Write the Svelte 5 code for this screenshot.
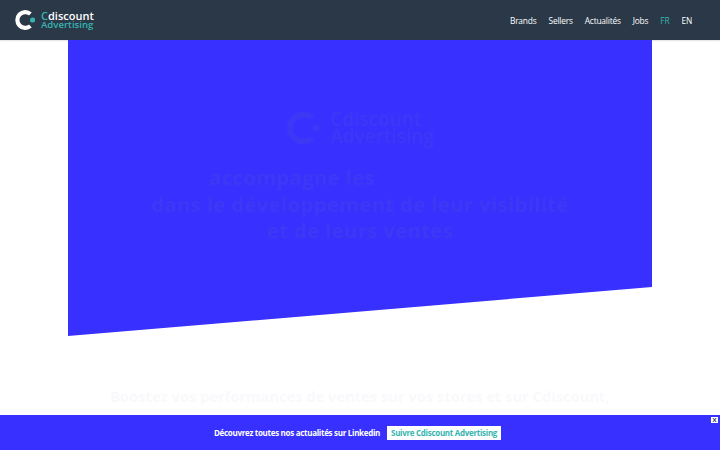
<script>
  const links = ['Brands', 'Sellers', 'Actualités', 'Jobs'];
</script>

<header class="nav">
  <a class="logo" href="#top">
    <svg width="20" height="20" viewBox="0 0 20 20" aria-hidden="true">
      <path d="M15.4 4 A7.9 7.9 0 1 0 15.4 16" fill="none" stroke="#fff" stroke-width="4.2"/>
      <circle cx="17.6" cy="10" r="2.6" fill="#36b5b0"/>
    </svg>
    <span class="wordmark"><span class="w1"><b>C</b>discount</span><span class="w2">Advertising</span></span>
  </a>
  <nav class="links">
    {#each links as l}<a href="#top">{l}</a>{/each}
    <a href="#top" class="active">FR</a>
    <a href="#top">EN</a>
  </nav>
</header>

<main>
  <section class="hero">
    <div class="hero-logo">
      <svg width="34" height="36" viewBox="0 0 20 20" aria-hidden="true">
        <path d="M15.4 4 A7.9 7.9 0 1 0 15.4 16" fill="none" stroke="currentColor" stroke-width="3.6"/>
        <circle cx="17.6" cy="10" r="2.2" fill="currentColor"/>
      </svg>
      <span class="hero-word"><span>Cdiscount</span><span>Advertising</span></span>
    </div>
    <h1>
      <span class="first">accompagne les</span>
      <span>dans le développement de leur visibilité</span>
      <span>et de leurs ventes</span>
    </h1>
  </section>
  <h2>Boostez vos performances de ventes sur vos stores et sur Cdiscount,</h2>
</main>

<aside class="banner">
  <span>Découvrez toutes nos actualités sur Linkedin</span>
  <a class="cta" href="#top">Suivre Cdiscount Advertising</a>
  <button class="close">X</button>
</aside>

<style>
  :global(body) {
    margin: 0;
    background: #fff;
    overflow: hidden;
    font-family: "Open Sans", "Inter", sans-serif;
  }
  .nav {
    height: 40px;
    background: #2a3847;
    display: flex;
    align-items: center;
    justify-content: space-between;
    padding: 0 28px 0 15px;
    box-shadow: 0 0 2px rgba(0, 0, 0, 0.3);
  }
  .logo {
    display: flex;
    align-items: center;
    gap: 6px;
    text-decoration: none;
  }
  .logo svg { display: block; }
  .wordmark {
    display: flex;
    flex-direction: column;
    font-weight: 600;
    line-height: 9.5px;
  }
  .w1 { color: #fff; font-size: 11px; }
  .w1 b { color: #36b5b0; font-weight: 600; }
  .w2 { color: #36b5b0; font-size: 9.6px; }
  .links {
    display: flex;
    gap: 12px;
  }
  .links a {
    color: #fff;
    font-size: 8.4px;
    font-weight: 500;
    text-decoration: none;
    letter-spacing: -0.2px;
  }
  .links a.active { color: #36b5b0; }
  main {
    display: flex;
    flex-direction: column;
    align-items: center;
  }
  .hero {
    width: 584px;
    height: 296px;
    background: #3830ff;
    clip-path: polygon(0 0, 100% 0, 100% 247px, 0 100%);
    color: #3c38f6;
    box-sizing: border-box;
    padding-top: 70px;
    display: flex;
    flex-direction: column;
    align-items: center;
  }
  .hero-logo {
    display: flex;
    align-items: center;
    gap: 10px;
  }
  .hero-word {
    display: flex;
    flex-direction: column;
    font-size: 19px;
    line-height: 17px;
    font-weight: 600;
  }
  h1 {
    margin: 18px 0 0;
    font-size: 20.2px;
    line-height: 26.5px;
    font-weight: 700;
    text-align: center;
    display: flex;
    flex-direction: column;
    letter-spacing: 0.4px;
  }
  h1 .first { margin-right: 136px; }
  h2 {
    margin: 52px 0 0;
    font-size: 14.4px;
    line-height: 18px;
    font-weight: 700;
    color: #f9f9fc;
    text-align: center;
    letter-spacing: 0.15px;
  }
  .banner {
    position: fixed;
    left: 0;
    right: 0;
    bottom: 0;
    height: 35px;
    background: #3830ff;
    display: flex;
    align-items: center;
    justify-content: center;
    gap: 7px;
    padding-right: 5px;
    color: #fff;
    font-size: 8px;
    font-weight: 700;
    letter-spacing: -0.3px;
  }
  .cta {
    background: #fff;
    color: #36b5b0;
    font-size: 8px;
    font-weight: 700;
    text-decoration: none;
    padding: 3px 4px;
    line-height: 8px;
    letter-spacing: -0.3px;
  }
  .close {
    position: absolute;
    top: 2px;
    right: 2px;
    width: 7px;
    height: 6px;
    padding: 0;
    border: 0;
    background: #fff;
    color: #2a3847;
    font: 700 6px/6px "Open Sans", sans-serif;
    letter-spacing: 0;
  }
</style>
